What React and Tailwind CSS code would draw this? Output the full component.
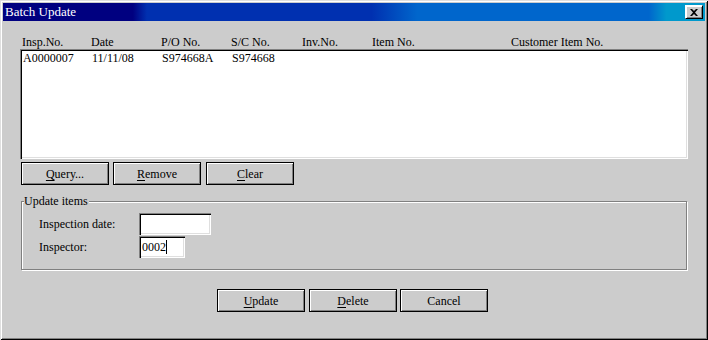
import React from 'react';

const raised = 'border border-black shadow-[inset_1px_1px_#ffffff,inset_-1px_-1px_#808080]';
const sunken = 'shadow-[inset_1px_1px_#808080,inset_2px_2px_#000000,inset_-1px_-1px_#ffffff,inset_-2px_-2px_#dfdfdf]';

const Btn = ({ hot, rest, children }) => (
  <button className={`w-[88px] h-[23px] bg-[#cccccc] flex items-center justify-center ${raised}`}>
    {hot ? (
      <span>
        <span className="underline underline-offset-2">{hot}</span>
        {rest}
      </span>
    ) : (
      children
    )}
  </button>
);

const columns = [
  { label: 'Insp.No.', w: 'w-[69px]' },
  { label: 'Date', w: 'w-[70px]' },
  { label: 'P/O No.', w: 'w-[70px]' },
  { label: 'S/C No.', w: 'w-[71px]' },
  { label: 'Inv.No.', w: 'w-[70px]' },
  { label: 'Item No.', w: 'w-[139px]' },
  { label: 'Customer Item No.', w: 'w-[150px]' },
];

const row = ['A0000007', '11/11/08', 'S974668A', 'S974668', '', '', ''];

export default function App() {
  return (
    <div
      className="w-[708px] h-[340px] bg-[#cccccc] p-[3px] text-[12px] leading-[14px] text-black shadow-[inset_1px_1px_#dfdfdf,inset_-1px_-1px_#000000,inset_2px_2px_#ffffff,inset_-2px_-2px_#808080] flex flex-col"
      style={{ fontFamily: '"Liberation Serif", serif' }}
    >
      {/* title bar */}
      <div className="h-[18px] flex items-center justify-between pl-[2px] pr-[2px] bg-[linear-gradient(to_right,#000080_0%,#000080_18.5%,#0030b0_20.5%,#0030b0_52.5%,#0066cc_59%,#0066cc_92%,#0099cc_94.5%,#0099cc_100%)]">
        <span className="text-white text-[13px]">Batch Update</span>
        <div className={`w-[18px] h-[14px] bg-[#cccccc] flex items-center justify-center ${raised} border-t-[#ffffff] border-l-[#ffffff]`}>
          <svg width="8" height="7" viewBox="0 0 8 7">
            <path d="M0 0h2l2 2 2-2h2L5 3.5 8 7H6L4 5 2 7H0l3-3.5z" fill="#000" />
          </svg>
        </div>
      </div>

      <div className="flex flex-col pl-[17px]">
        {/* column header */}
        <div className="flex mt-[14px] h-[14px] pl-[2px]">
          {columns.map((c) => (
            <span key={c.label} className={`${c.w} shrink-0 whitespace-nowrap`}>{c.label}</span>
          ))}
        </div>

        {/* list */}
        <div className={`w-[668px] h-[110px] bg-white pt-[2px] pl-[3px] ${sunken}`}>
          <div className="flex h-[14px]">
            {row.map((v, i) => (
              <span key={i} className={`${columns[i].w} shrink-0 whitespace-nowrap`}>{v}</span>
            ))}
          </div>
        </div>

        {/* list buttons */}
        <div className="flex mt-[3px] pl-[1px]">
          <Btn hot="Q" rest="uery..." />
          <div className="ml-[4px]"><Btn hot="R" rest="emove" /></div>
          <div className="ml-[5px]"><Btn hot="C" rest="lear" /></div>
        </div>

        {/* group box */}
        <div className="relative mt-[16px] ml-[1px] w-[666px] h-[69px] border border-[#808080] shadow-[inset_1px_1px_#ffffff,1px_1px_#ffffff] pt-[11px] pl-[17px]">
          <span className="absolute -top-[8px] left-[2px] bg-[#cccccc] pr-[1px]">Update items</span>
          <div className="flex items-center h-[22px]">
            <span className="w-[100px]">Inspection date:</span>
            <div className={`w-[72px] h-[22px] bg-white ${sunken}`} />
          </div>
          <div className="flex items-center h-[22px] mt-[1px]">
            <span className="w-[100px]">Inspector:</span>
            <div className={`w-[46px] h-[22px] bg-white flex items-center pl-[3px] ${sunken}`}>
              <span>0002</span>
              <span className="w-px h-[14px] bg-black" />
            </div>
          </div>
        </div>

        {/* bottom buttons */}
        <div className="flex mt-[19px] pl-[197px]">
          <Btn hot="U" rest="pdate" />
          <div className="ml-[4px]"><Btn hot="D" rest="elete" /></div>
          <div className="ml-[3px]"><Btn>Cancel</Btn></div>
        </div>
      </div>
    </div>
  );
}
